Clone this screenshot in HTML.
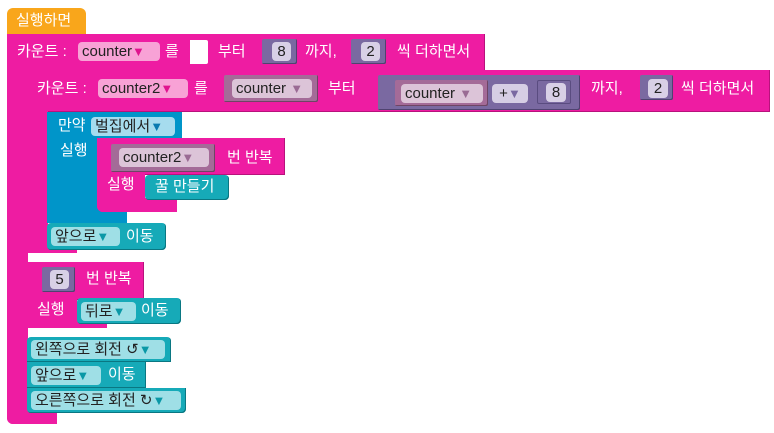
<!DOCTYPE html>
<html><head><meta charset="utf-8"><style>
body{margin:0;width:774px;height:433px;background:#fff;position:relative;overflow:hidden;font-family:"Liberation Sans","Noto Sans CJK KR",sans-serif;font-size:15px}
.b{position:absolute}
.p{background:#ee1ca2}
.bl{background:#0095c9}
.t{background:#16aab8;box-shadow:inset -1px -1px 0 #0a7782;border-radius:4px}
.pu{background:#7a69a1;box-shadow:inset -1px -1px 0 #4f4370;border-radius:2px}
.mv{background:#a46b98;box-shadow:inset -1px -1px 0 #6e4565;border-radius:2px}
.tx{position:absolute;color:#fff;white-space:nowrap;line-height:19px}
.f{position:absolute;border-radius:4px;color:#222;white-space:nowrap;line-height:19px;padding-left:4px;box-sizing:border-box}
.fp{background:#f8a2d6}
.fm{background:#dcc4d8}
.fb{background:#a6dcee}
.ft{background:#9fdfe6}
.fn{background:#d8d0e6;text-align:center;padding:0}
.ar{font-size:13px;color:#e0148f}
.arm{font-size:13px;color:#9a6b94}
.arb{font-size:13px;color:#0a7ab0}
.art{font-size:13px;color:#0a98a6}
.arp{font-size:13px;color:#7a69a1}
</style></head><body>
<!-- hat -->
<div class="b" style="left:7px;top:8px;width:79px;height:28px;background:#f9a61b;border-radius:6px 6px 0 0"></div>
<div class="tx" style="left:16px;top:11px">실행하면</div>
<!-- outer pink -->
<div class="b p" style="left:7px;top:34px;width:478px;height:37px;box-shadow:inset -1px -1px 0 #b8127c"></div>
<div class="b p" style="left:7px;top:34px;width:21px;height:390px;border-radius:0 0 0 6px"></div>
<div class="b p" style="left:7px;top:412px;width:50px;height:12px;border-radius:0 0 0 6px"></div>
<div class="tx" style="left:17px;top:42px">카운트 :</div>
<div class="f fp" style="left:78px;top:42px;width:82px">counter<span class="ar">▼</span></div>
<div class="tx" style="left:165px;top:42px">를</div>
<div class="b" style="left:190px;top:40px;width:18px;height:24px;background:#fff;border-radius:0 2px 2px 0"></div>
<div class="tx" style="left:218px;top:42px">부터</div>
<div class="b pu" style="left:262px;top:39px;width:35px;height:25px"></div>
<div class="f fn" style="left:272px;top:42px;width:19px">8</div>
<div class="tx" style="left:305px;top:42px">까지,</div>
<div class="b pu" style="left:351px;top:39px;width:35px;height:25px"></div>
<div class="f fn" style="left:361px;top:42px;width:19px">2</div>
<div class="tx" style="left:397px;top:42px">씩 더하면서</div>
<!-- inner counter2 -->
<div class="b p" style="left:27px;top:70px;width:743px;height:42px;border-radius:6px 0 0 0;box-shadow:inset -1px -1px 0 #b8127c"></div>
<div class="b p" style="left:27px;top:70px;width:21px;height:183px"></div>
<div class="b p" style="left:27px;top:242px;width:50px;height:11px"></div>
<div class="tx" style="left:37px;top:79px">카운트 :</div>
<div class="f fp" style="left:98px;top:79px;width:90px">counter2<span class="ar">▼</span></div>
<div class="tx" style="left:194px;top:79px">를</div>
<div class="b mv" style="left:224px;top:75px;width:94px;height:27px"></div>
<div class="f fm" style="left:232px;top:79px;width:80px">counter <span class="arm">▼</span></div>
<div class="tx" style="left:328px;top:79px">부터</div>
<div class="b pu" style="left:378px;top:75px;width:202px;height:35px"></div>
<div class="b mv" style="left:395px;top:80px;width:93px;height:26px"></div>
<div class="f fm" style="left:401px;top:84px;width:82px">counter <span class="arm">▼</span></div>
<div class="f fn" style="left:492px;top:84px;width:36px;background:#d6cee4">+<span class="arp">▼</span></div>
<div class="b pu" style="left:537px;top:80px;width:34px;height:24px;box-shadow:inset 0 0 0 1px #5a4c80"></div>
<div class="f fn" style="left:546px;top:83px;width:20px">8</div>
<div class="tx" style="left:591px;top:79px">까지,</div>
<div class="b pu" style="left:640px;top:75px;width:33px;height:25px"></div>
<div class="f fn" style="left:648px;top:79px;width:20px">2</div>
<div class="tx" style="left:681px;top:79px">씩 더하면서</div>
<!-- blue if -->
<div class="b bl" style="left:47px;top:112px;width:135px;height:26px;border-radius:6px 0 0 0"></div>
<div class="b bl" style="left:47px;top:112px;width:51px;height:111px"></div>
<div class="b bl" style="left:47px;top:205px;width:80px;height:18px"></div>
<div class="tx" style="left:58px;top:116px">만약</div>
<div class="f fb" style="left:91px;top:117px;width:84px">벌집에서<span class="arb">▼</span></div>
<div class="tx" style="left:60px;top:141px">실행</div>
<!-- pink repeat counter2 -->
<div class="b p" style="left:97px;top:138px;width:188px;height:37px;border-radius:6px 0 0 0;box-shadow:inset -1px -1px 0 #b8127c"></div>
<div class="b p" style="left:97px;top:138px;width:48px;height:74px;border-radius:0 0 0 6px"></div>
<div class="b p" style="left:97px;top:198px;width:80px;height:14px;border-radius:0 0 0 6px"></div>
<div class="b mv" style="left:111px;top:144px;width:104px;height:28px"></div>
<div class="f fm" style="left:119px;top:148px;width:90px">counter2<span class="arm">▼</span></div>
<div class="tx" style="left:227px;top:148px">번 반복</div>
<div class="tx" style="left:107px;top:175px">실행</div>
<div class="b t" style="left:145px;top:175px;width:84px;height:25px"></div>
<div class="tx" style="left:155px;top:177px">꿀 만들기</div>
<!-- forward -->
<div class="b t" style="left:47px;top:223px;width:119px;height:27px"></div>
<div class="f ft" style="left:51px;top:227px;width:69px">앞으로<span class="art">▼</span></div>
<div class="tx" style="left:126px;top:227px">이동</div>
<!-- repeat 5 -->
<div class="b p" style="left:27px;top:262px;width:117px;height:38px;box-shadow:inset -1px -1px 0 #b8127c"></div>
<div class="b p" style="left:27px;top:262px;width:50px;height:66px"></div>
<div class="b p" style="left:27px;top:320px;width:80px;height:8px"></div>
<div class="b pu" style="left:42px;top:267px;width:33px;height:25px"></div>
<div class="f fn" style="left:50px;top:270px;width:19px">5</div>
<div class="tx" style="left:86px;top:269px">번 반복</div>
<div class="tx" style="left:37px;top:300px">실행</div>
<div class="b t" style="left:77px;top:298px;width:104px;height:26px"></div>
<div class="f ft" style="left:81px;top:302px;width:55px">뒤로<span class="art">▼</span></div>
<div class="tx" style="left:141px;top:301px">이동</div>
<!-- bottom stack -->
<div class="b t" style="left:27px;top:337px;width:144px;height:25px;border-radius:4px 4px 0 0"></div>
<div class="f ft" style="left:31px;top:340px;width:134px">왼쪽으로 회전 ↺<span class="art">▼</span></div>
<div class="b t" style="left:27px;top:362px;width:119px;height:26px;border-radius:0"></div>
<div class="f ft" style="left:31px;top:366px;width:70px">앞으로<span class="art">▼</span></div>
<div class="tx" style="left:108px;top:365px">이동</div>
<div class="b t" style="left:27px;top:388px;width:159px;height:25px;border-radius:0 0 4px 4px"></div>
<div class="f ft" style="left:31px;top:391px;width:150px">오른쪽으로 회전 ↻<span class="art">▼</span></div>
</body></html>
